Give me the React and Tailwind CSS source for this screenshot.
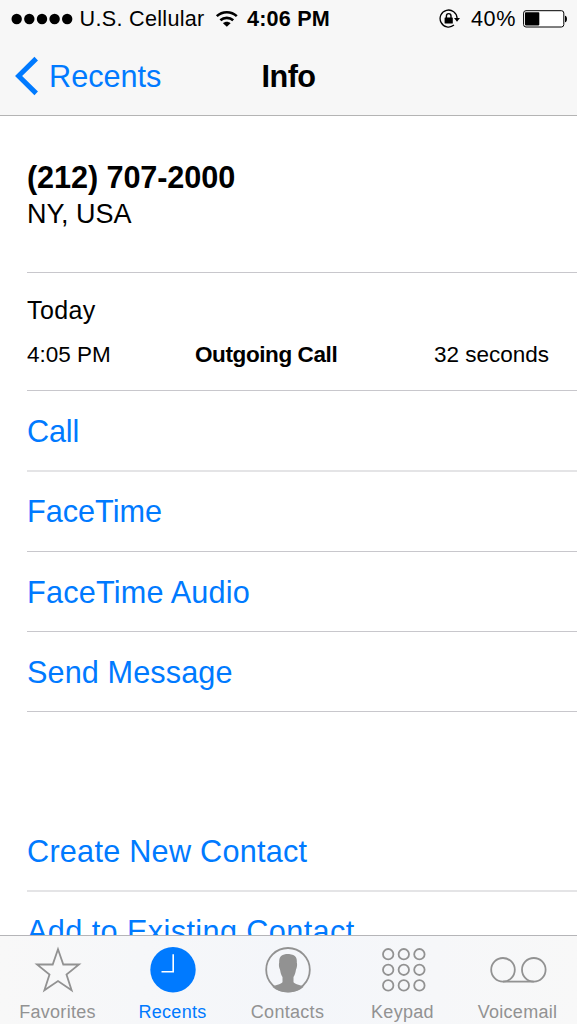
import clsx from 'clsx';

const actions = [
  { label: 'Call', row: 'h-[81px] border-b-2 border-[#e4e4e6] pt-[2px] tracking-[-0.2px]' },
  { label: 'FaceTime', row: 'h-20 border-b border-[#c8c7cc]' },
  { label: 'FaceTime Audio', row: 'h-20 border-b border-[#c8c7cc] pt-px tracking-[0.2px]' },
  { label: 'Send Message', row: 'h-20 border-b border-[#c8c7cc] pt-[2px] tracking-[0.1px]' },
];

function WifiIcon() {
  return (
    <svg width="24" height="18" viewBox="0 0 24 18" fill="none" stroke="black" strokeWidth="2.6">
      <path d="M1.8 6.1C7.4 .9 16.2 .9 21.8 6.1" />
      <path d="M5.4 10.3C9 7 14.6 7 18.2 10.3" />
      <path d="M11.8 16.8L8 13.2C10.1 11.2 13.5 11.2 15.6 13.2Z" fill="black" stroke="none" />
    </svg>
  );
}

function RotationLockIcon() {
  return (
    <svg width="22" height="20" viewBox="0 0 22 20" fill="none" stroke="black" strokeWidth="1.3">
      <path d="M18.1 9.2A8.5 8.5 0 1 0 15 16.1" />
      <path d="M15 9h6l-3 3.7z" fill="black" stroke="none" />
      <rect x="5.6" y="8.6" width="8.2" height="5.8" rx=".5" fill="black" stroke="none" />
      <path d="M7.4 9V6.9a2.3 2.3 0 0 1 4.6 0V9" strokeWidth="1.4" />
    </svg>
  );
}

function BatteryIcon() {
  return (
    <svg width="45" height="18" viewBox="0 0 45 18">
      <rect x=".6" y=".7" width="40.2" height="16.3" rx="2.4" fill="white" stroke="black" />
      <rect x="2" y="2.2" width="14.3" height="13.2" rx=".8" />
      <path d="M42 5.8c2.6 0 2.6 6.5 0 6.5z" />
    </svg>
  );
}

function StatusBar() {
  return (
    <div className="flex h-[37px] items-center text-[21.6px] leading-none">
      <svg className="ml-[11px]" width="62" height="12" viewBox="0 0 62 12">
        {[5.7, 18.3, 31, 43.6, 56.2].map((x) => (
          <circle key={x} cx={x} cy="6" r="5.2" />
        ))}
      </svg>
      <span className="ml-[6.5px] w-[135.5px] tracking-[0.3px]">U.S. Cellular</span>
      <WifiIcon />
      <span className="ml-[8px] font-bold tracking-[0.2px]">4:06 PM</span>
      <div className="ml-auto flex items-center pr-[9px]">
        <RotationLockIcon />
        <span className="mr-[7px] ml-[10px] tracking-[0.6px]">40%</span>
        <BatteryIcon />
      </div>
    </div>
  );
}

function StarIcon() {
  return (
    <svg width="48" height="48" viewBox="0 0 48 48" fill="none" stroke="#929292" strokeWidth="1.8">
      <path d="M24 3.2L29.3 18.5H45L32.5 28.6L37.6 44.3L24 35L10.4 44.3L15.5 28.6L3 18.5H18.7Z" />
    </svg>
  );
}

function ClockIcon() {
  return (
    <svg width="48" height="48" viewBox="0 0 48 48">
      <circle cx="24" cy="23.8" r="22.7" fill="#007aff" />
      <path d="M24.2 8.2V25.8H12.5" fill="none" stroke="white" strokeWidth="1.6" />
    </svg>
  );
}

function ContactIcon() {
  return (
    <svg width="48" height="48" viewBox="0 0 48 48">
      <circle cx="24" cy="23.8" r="21.8" fill="none" stroke="#929292" strokeWidth="1.8" />
      <path
        fill="#929292"
        d="M24 8C18 8 14.8 10.5 15.2 16.5C14.6 18.5 15 21.5 16 23.5C16.5 27 17.2 29 18.5 31V36C18 38 11.5 39 8.3 40.7C16 48.2 32 48.2 39.7 40.7C36.5 39 30 38 29.5 36V31C30.8 29 31.5 27 32 23.5C33 21.5 33.4 18.5 32.8 16.5C33.2 11.5 31 9.3 28.3 8.8C27 8.1 25.5 8 24 8Z"
      />
    </svg>
  );
}

function KeypadIcon() {
  return (
    <svg width="48" height="48" viewBox="0 0 48 48" fill="none" stroke="#929292" strokeWidth="1.8">
      {[8.2, 23.8, 39.4].map((y) =>
        [9.2, 24.8, 40.4].map((x) => <circle key={`${x}-${y}`} cx={x} cy={y} r="5.2" />)
      )}
    </svg>
  );
}

function VoicemailIcon() {
  return (
    <svg width="58" height="48" viewBox="0 0 58 48" fill="none" stroke="#929292" strokeWidth="1.8">
      <circle cx="14" cy="23.8" r="11.8" />
      <circle cx="44.8" cy="23.8" r="11.8" />
      <path d="M14 35.6H44.8" />
    </svg>
  );
}

const tabs = [
  { label: 'Favorites', icon: StarIcon },
  { label: 'Recents', icon: ClockIcon, active: true },
  { label: 'Contacts', icon: ContactIcon },
  { label: 'Keypad', icon: KeypadIcon },
  { label: 'Voicemail', icon: VoicemailIcon },
];

function TabBar() {
  return (
    <nav className="grid h-[89px] shrink-0 grid-cols-5 border-t border-[#b5b5b8] bg-linear-to-r from-[#f8f8f8] via-[#f4f6fa] to-[#f8f8f8] pr-[2px]">
      {tabs.map(({ label, icon: Icon, active }) => (
        <button
          key={label}
          className={clsx('flex flex-col items-center pt-[10px]', active ? 'text-[#007aff]' : 'text-[#929292]')}
        >
          <Icon />
          <span className="mt-[8px] text-[18px] leading-[20px] tracking-[0.3px]">{label}</span>
        </button>
      ))}
    </nav>
  );
}

export default function App() {
  return (
    <div className="flex h-[1024px] w-[577px] flex-col overflow-hidden bg-white font-['Liberation_Sans',Arial,sans-serif] text-black">
      <header className="h-[116px] shrink-0 border-b border-[#b4b4b4] bg-[#f7f7f7]">
        <StatusBar />
        <div className="grid h-[78px] grid-cols-3 items-center text-[30.65px] leading-none">
          <button className="flex items-center pl-[15px] text-[#007aff]">
            <svg width="24" height="40" viewBox="0 0 24 40" fill="none" stroke="#007aff" strokeWidth="5">
              <path d="M21.2 2.6L3.6 20L21.2 37.4" />
            </svg>
            <span className="ml-[10px]">Recents</span>
          </button>
          <h1 className="text-center font-bold tracking-[-0.5px]">Info</h1>
        </div>
      </header>

      <main className="min-h-0 flex-1 overflow-hidden pl-[27px]">
        <section className="h-[157px] border-b border-[#c8c7cc] pt-[43px]">
          <h2 className="text-[30.65px] leading-[36px] font-bold tracking-[-0.1px]">(212) 707-2000</h2>
          <p className="mt-px text-[27px] leading-[36px]">NY, USA</p>
        </section>

        <section className="h-[118px] border-b border-[#c8c7cc] pt-[21px]">
          <p className="text-[25px] leading-[32px] tracking-[0.4px]">Today</p>
          <div className="mt-[15px] flex text-[22.5px] leading-[28px]">
            <span className="w-[168px]">4:05 PM</span>
            <span className="font-bold tracking-[-0.4px]">Outgoing Call</span>
            <span className="mr-[28px] ml-auto">32 seconds</span>
          </div>
        </section>

        {actions.map(({ label, row }) => (
          <button key={label} className={clsx('flex w-full items-center text-[30.65px] leading-none text-[#007aff]', row)}>
            {label}
          </button>
        ))}

        <div className="mt-[99px]">
          <button className="flex h-[81px] w-full items-center border-b-2 border-[#e4e4e6] pt-[2px] text-[30.65px] leading-none tracking-[0.25px] text-[#007aff]">
            Create New Contact
          </button>
          <button className="flex h-[78px] w-full items-center text-[30.65px] leading-none tracking-[0.4px] text-[#007aff]">
            Add to Existing Contact
          </button>
        </div>
      </main>

      <TabBar />
    </div>
  );
}
